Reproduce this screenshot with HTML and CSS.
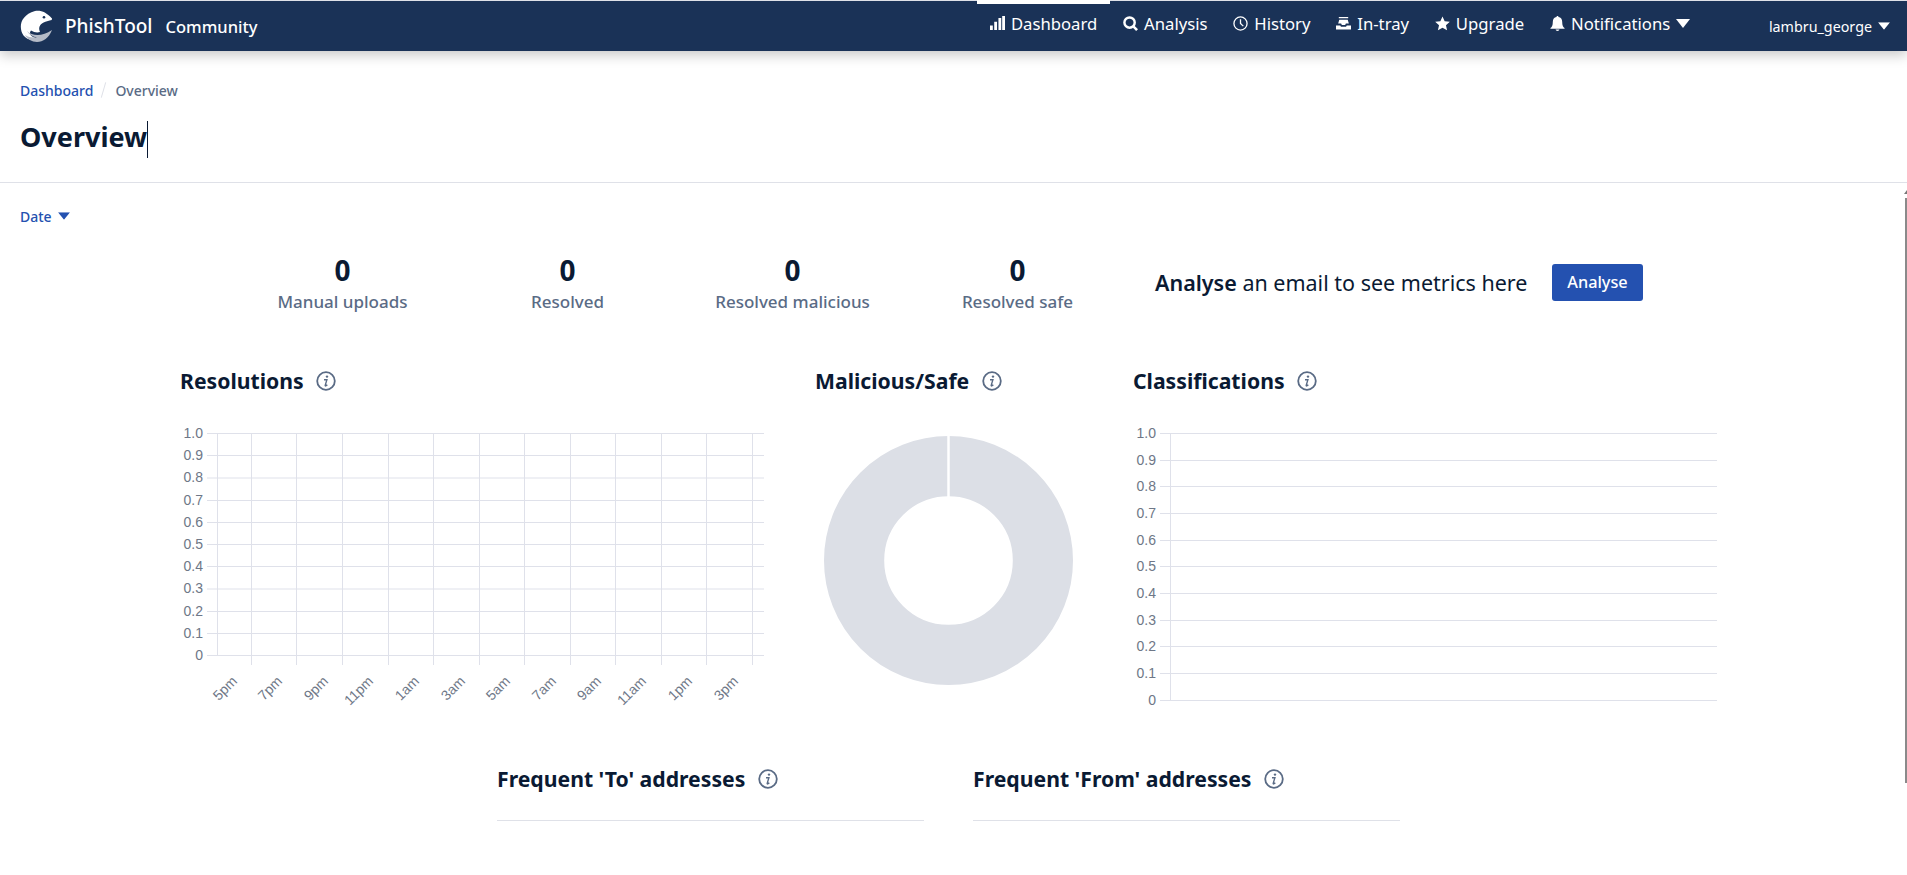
FILE: index.html
```html
<!DOCTYPE html>
<html>
  <head>
    <title>PhishTool - Overview</title>
    <meta charset="utf-8" />
    <meta name="viewport" content="width=device-width, initial-scale=1.0" />
    <link rel="stylesheet" href="styles.css">
  </head>

  <body>
    <svg class="defs" width="0" height="0">
      <symbol id="info" viewBox="0 0 20 20">
        <circle cx="10" cy="10" r="8.800" fill="none" stroke="currentColor" stroke-width="1.800" />
        <circle cx="11" cy="5.600" r="1.200" fill="currentColor" />
        <path d="M8 8.800h2.900l-1.700 5.500q-.1.800.6.600.7-.2 1.500-1.100" fill="none" stroke="currentColor" stroke-width="1.400" />
      </symbol>
      <symbol id="caret" viewBox="0 0 14 9">
        <path d="M0 0h14L7 9z" fill="currentColor" />
      </symbol>
    </svg>

    <header class="topbar">
      <div class="brand">
        <svg class="logo" viewBox="0 0 33 33">
          <path d="M15 1C21 0 26 2 32 8.500c.4.8-.5 1.400-1.500 1.800-3.500 1.200-7 1.700-9.500 4-1.800 1.800-2.500 4.700-1 7.700-2.500.8-6 .5-9-1.500C8 24 12 28 18 28.300 13 31 7 30 3.500 25.500-1.500 18-.5 5.500 15 1z" fill="#fff" />
          <circle cx="24" cy="7.300" r="1.300" fill="#1a3257" />
          <path d="M7 21c5 5 15 6 25-1-3 8-9 12-15 12-5 0-10-3-12-7 4 2.500 8 2.800 12 2.300C13 27 9 24.500 7 21z" fill="#b4bac6" />
        </svg>
        <span class="brand-name">PhishTool</span>
        <span class="brand-tier">Community</span>
      </div>
      <nav class="nav">
        <a class="nav-item active">
          <svg class="nav-icon" viewBox="0 0 16 16"><path d="M0 10h3v5H0zM4.500 6h3v9h-3zM9 2h3v13H9zM13 0h3v15h-3z" fill="currentColor" /></svg>
          Dashboard
        </a>
        <a class="nav-item">
          <svg class="nav-icon" viewBox="0 0 16 16"><circle cx="7" cy="7" r="5.500" fill="none" stroke="currentColor" stroke-width="2.600" /><path d="M10.800 10.800L15 15" stroke="currentColor" stroke-width="2.800" /></svg>
          Analysis
        </a>
        <a class="nav-item">
          <svg class="nav-icon" viewBox="0 0 16 16"><circle cx="8" cy="8" r="7" fill="none" stroke="currentColor" stroke-width="1.400" /><path d="M8 3.500V8l3 2.800" fill="none" stroke="currentColor" stroke-width="1.400" /></svg>
          History
        </a>
        <a class="nav-item">
          <svg class="nav-icon" viewBox="0 0 16 16"><path d="M3 1h10v1.400H3zM3.500 4h9l1.200 4H10.500l-.7 1.500H6.200L5.500 8H2.300zM0 10h4.500l.8 1.500h5.400l.8-1.500H16v4.500H0z" fill="currentColor" /></svg>
          In-tray
        </a>
        <a class="nav-item">
          <svg class="nav-icon" viewBox="0 0 16 16"><path d="M8 .5l2.300 5 5.500.6-4.100 3.700 1.200 5.400L8 12.400l-4.900 2.800 1.200-5.400L.2 6.100l5.500-.6z" fill="currentColor" /></svg>
          Upgrade
        </a>
        <a class="nav-item">
          <svg class="nav-icon" viewBox="0 0 16 16"><path d="M8 0c.7 0 1.100.5 1.100 1.100C11.600 1.600 13 3.500 13 6c0 4 1 5.500 2.500 6.800v.9H.5v-.9C2 11.500 3 10 3 6c0-2.500 1.400-4.400 3.900-4.900C6.900.5 7.300 0 8 0zM6 14.500h4c0 1-.9 1.500-2 1.500s-2-.5-2-1.500z" fill="currentColor" /></svg>
          Notifications
          <svg class="caret-icon" viewBox="0 0 14 9"><use href="#caret" /></svg>
        </a>
      </nav>
      <a class="user-menu">
        lambru_george
        <svg class="caret-icon small" viewBox="0 0 14 9"><use href="#caret" /></svg>
      </a>
    </header>

    <section class="page-head">
      <div class="breadcrumb">
        <a class="crumb-link">Dashboard</a>
        <span class="crumb-sep"></span>
        <span class="crumb-current">Overview</span>
      </div>
      <h1 class="page-title">Overview<span class="text-cursor"></span></h1>
    </section>

    <div class="date-row">
      <a class="date-filter">
        Date
        <svg class="date-caret" viewBox="0 0 14 9"><use href="#caret" /></svg>
      </a>
    </div>

    <section class="stats">
      <div class="stat">
        <div class="stat-value">0</div>
        <div class="stat-label">Manual uploads</div>
      </div>
      <div class="stat">
        <div class="stat-value">0</div>
        <div class="stat-label">Resolved</div>
      </div>
      <div class="stat">
        <div class="stat-value">0</div>
        <div class="stat-label">Resolved malicious</div>
      </div>
      <div class="stat">
        <div class="stat-value">0</div>
        <div class="stat-label">Resolved safe</div>
      </div>
      <div class="analyse">
        <p class="analyse-text"><strong>Analyse</strong> an email to see metrics here</p>
        <button class="analyse-btn">Analyse</button>
      </div>
    </section>

    <section class="charts">
      <div class="chart chart-resolutions">
        <h2 class="chart-title">Resolutions <svg class="info-icon"><use href="#info" /></svg></h2>
        <svg class="plot" width="620" height="290" viewBox="0 0 620 290">
          <path class="grid" d="M27 8.500H584M27 30.500H584M27 53H584M27 75.500H584M27 97.500H584M27 119.500H584M27 141.500H584M27 164H584M27 186.500H584M27 208.500H584M27 230.500H584" />
          <path class="grid" d="M37.500 8.500V230.500M71.500 8.500V240M116.500 8.500V240M162.500 8.500V240M208.500 8.500V240M253.500 8.500V240M299.500 8.500V240M344.500 8.500V240M390.500 8.500V240M435.500 8.500V240M481.500 8.500V240M526.500 8.500V240M572.500 8.500V240" />
          <g class="y-labels">
            <text x="23" y="12.500">1.0</text>
            <text x="23" y="34.500">0.9</text>
            <text x="23" y="57">0.8</text>
            <text x="23" y="79.500">0.7</text>
            <text x="23" y="101.500">0.6</text>
            <text x="23" y="123.500">0.5</text>
            <text x="23" y="145.500">0.4</text>
            <text x="23" y="168">0.3</text>
            <text x="23" y="190.500">0.2</text>
            <text x="23" y="212.500">0.1</text>
            <text x="23" y="234.500">0</text>
          </g>
          <g class="x-labels">
            <text transform="translate(58 257) rotate(-45)">5pm</text>
            <text transform="translate(103 257) rotate(-45)">7pm</text>
            <text transform="translate(149 257) rotate(-45)">9pm</text>
            <text transform="translate(194 257) rotate(-45)">11pm</text>
            <text transform="translate(240 257) rotate(-45)">1am</text>
            <text transform="translate(286 257) rotate(-45)">3am</text>
            <text transform="translate(331 257) rotate(-45)">5am</text>
            <text transform="translate(377 257) rotate(-45)">7am</text>
            <text transform="translate(422 257) rotate(-45)">9am</text>
            <text transform="translate(467 257) rotate(-45)">11am</text>
            <text transform="translate(513 257) rotate(-45)">1pm</text>
            <text transform="translate(559 257) rotate(-45)">3pm</text>
          </g>
        </svg>
      </div>

      <div class="chart chart-donut">
        <h2 class="chart-title">Malicious/Safe <svg class="info-icon"><use href="#info" /></svg></h2>
        <svg class="plot" width="270" height="290" viewBox="0 0 270 290">
          <circle cx="133.500" cy="135.500" r="94.400" fill="none" stroke="#dcdfe6" stroke-width="60.200" />
          <path d="M133.500 10V72" stroke="#fff" stroke-width="2.500" />
        </svg>
      </div>

      <div class="chart chart-classifications">
        <h2 class="chart-title">Classifications <svg class="info-icon"><use href="#info" /></svg></h2>
        <svg class="plot" width="620" height="290" viewBox="0 0 620 290">
          <path class="grid" d="M27 8.500H584M27 35.500H584M27 61.500H584M27 88.500H584M27 115.500H584M27 141.500H584M27 168.500H584M27 195.500H584M27 221.500H584M27 248.500H584M27 275.500H584M37.500 8.500V275.500" />
          <g class="y-labels">
            <text x="23" y="12.500">1.0</text>
            <text x="23" y="39.500">0.9</text>
            <text x="23" y="65.500">0.8</text>
            <text x="23" y="92.500">0.7</text>
            <text x="23" y="119.500">0.6</text>
            <text x="23" y="145.500">0.5</text>
            <text x="23" y="172.500">0.4</text>
            <text x="23" y="199.500">0.3</text>
            <text x="23" y="225.500">0.2</text>
            <text x="23" y="252.500">0.1</text>
            <text x="23" y="279.500">0</text>
          </g>
        </svg>
      </div>
    </section>

    <section class="frequent">
      <div class="frequent-col">
        <h2 class="chart-title">Frequent 'To' addresses <svg class="info-icon"><use href="#info" /></svg></h2>
      </div>
      <div class="frequent-col">
        <h2 class="chart-title">Frequent 'From' addresses <svg class="info-icon"><use href="#info" /></svg></h2>
      </div>
    </section>

    <div class="scroll-thumb"></div>
  </body>
</html>
```

FILE: styles.css
```css
html,
body {
  margin: 0;
  height: 875px;
  overflow: hidden;
}

body {
  position: relative;
  font-family: "Noto Sans", "Open Sans", sans-serif;
  background-color: #fff;
  color: #0a1a33;
}

.defs {
  position: absolute;
}

/* top bar */
.topbar {
  display: flex;
  align-items: stretch;
  height: 50px;
  background-color: #1a3257;
  border-top: 1px solid #dfe1e8;
  box-shadow: 0 4px 12px rgba(0, 0, 0, 0.22);
  color: #fff;
}

.brand {
  display: flex;
  align-items: center;
  width: 977px;
  padding-left: 20px;
  box-sizing: border-box;
}

.logo {
  width: 33px;
  height: 33px;
  margin-right: 12px;
}

.brand-name {
  font-size: 19px;
  font-weight: 500;
  margin-right: 13px;
}

.brand-tier {
  font-size: 16.500px;
  font-weight: 500;
}

.nav {
  display: flex;
}

.nav-item {
  display: flex;
  align-items: center;
  gap: 6px;
  position: relative;
  padding: 0 12.900px 5px;
  font-size: 16.700px;
  color: #fff;
}

.nav-item.active::before {
  content: "";
  position: absolute;
  top: -1px;
  left: 0;
  right: 0;
  height: 4px;
  background-color: #fff;
}

.nav-icon {
  width: 15px;
  height: 15px;
}

.caret-icon {
  width: 14px;
  height: 9px;
}

.caret-icon.small {
  width: 12px;
  height: 8px;
  margin-left: 6px;
}

.user-menu {
  display: flex;
  align-items: center;
  margin-left: auto;
  padding-right: 17px;
  font-size: 14.300px;
}

/* page head */
.page-head {
  height: 103px;
  padding: 28px 20px 0;
  border-bottom: 1px solid #dfe1e8;
}

.breadcrumb {
  display: flex;
  align-items: center;
  height: 22px;
  font-size: 14px;
  font-weight: 500;
}

.crumb-link {
  color: #2451b0;
}

.crumb-sep {
  width: 1px;
  height: 16px;
  margin: 0 11px 0 10px;
  background-color: #dfe1e8;
  transform: rotate(16deg);
}

.crumb-current {
  color: #5a6b85;
}

.page-title {
  margin: 19px 0 0;
  font-size: 27px;
  line-height: 34px;
  font-weight: 700;
}

.text-cursor {
  display: inline-block;
  width: 1px;
  height: 37px;
  vertical-align: middle;
  background-color: #0a1a33;
}

/* date filter */
.date-row {
  padding: 22px 20px 0;
  height: 20px;
}

.date-filter {
  display: inline-flex;
  align-items: center;
  gap: 6px;
  line-height: 20px;
  font-size: 14px;
  font-weight: 500;
  color: #2451b0;
}

.date-caret {
  width: 12px;
  height: 8px;
  margin-top: -2px;
}

/* numbers */
.stats {
  display: flex;
  height: 62px;
  margin-top: 27px;
  padding-left: 230px;
}

.stat {
  width: 225px;
  text-align: center;
}

.stat-value {
  font-size: 28px;
  line-height: 36px;
  font-weight: 700;
}

.stat-label {
  margin-top: 2px;
  font-size: 17px;
  line-height: 24px;
  font-weight: 500;
  color: #5a6b85;
}

.analyse {
  display: flex;
  align-items: center;
  height: 60px;
  margin-left: 25px;
}

.analyse-text {
  width: 397px;
  margin: 0;
  font-size: 21.500px;
  color: #0a1a33;
}

.analyse-text strong {
  font-weight: 600;
}

.analyse-btn {
  width: 91px;
  height: 37px;
  padding: 0;
  border: none;
  border-radius: 3px;
  background-color: #2451b0;
  color: #fff;
  font-family: inherit;
  font-size: 16.300px;
  font-weight: 500;
}

/* charts */
.charts {
  display: flex;
  margin-top: 53px;
  padding-left: 180px;
}

.chart-resolutions {
  width: 635px;
}

.chart-donut {
  width: 318px;
}

.chart-title {
  display: flex;
  align-items: center;
  margin: 0;
  font-size: 21.200px;
  line-height: 28px;
  font-weight: 700;
  white-space: pre;
}

.info-icon {
  width: 20px;
  height: 20px;
  margin-left: 7px;
  color: #5a6b85;
}

.plot {
  display: block;
  margin-top: 30px;
}

.grid {
  fill: none;
  stroke: #dfe1ea;
  stroke-width: 1;
}

.y-labels text,
.x-labels text {
  font-family: "Liberation Sans", sans-serif;
  font-size: 14px;
  fill: #6e7787;
  text-anchor: end;
}

/* address tables */
.frequent {
  display: flex;
  gap: 49px;
  margin-top: 50px;
  padding-left: 497px;
}

.frequent-col {
  width: 427px;
  padding-bottom: 27px;
  border-bottom: 1px solid #dfe1e8;
}

.scroll-thumb {
  position: absolute;
  top: 198px;
  right: 0;
  width: 2px;
  height: 585px;
  background-color: #8a8a8a;
}

.scroll-thumb::before {
  content: "";
  position: absolute;
  top: -8px;
  right: 0;
  border-left: 3px solid transparent;
  border-bottom: 4px solid #777;
}
```
